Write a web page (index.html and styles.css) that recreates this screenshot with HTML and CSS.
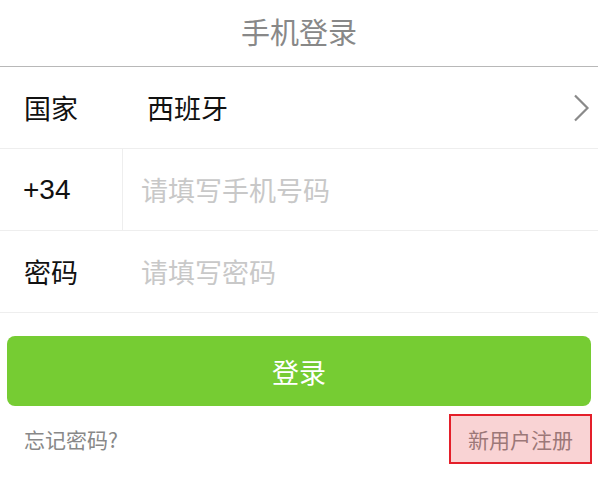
FILE: index.html
```html
<!DOCTYPE html>
<html lang="zh-CN">
<head>
    <meta charset="UTF-8">
    <meta name="viewport" content="width=device-width, initial-scale=1.0">
    <title>手机登录</title>
    <link rel="stylesheet" href="styles.css">
</head>
<body>
    <div class="header">手机登录</div>
    <div class="form">
        <div class="row">
            <div class="label">国家</div>
            <div class="value">西班牙</div>
            <svg class="arrow" width="18" height="28" viewBox="0 0 18 28">
                <path d="M3 1.5 L15.5 14 L3 26.5" fill="none" stroke="#8a8a8a" stroke-width="2.2"/>
            </svg>
        </div>
        <div class="row">
            <div class="label code">+34</div>
            <input class="field" type="tel" placeholder="请填写手机号码">
        </div>
        <div class="row">
            <div class="label">密码</div>
            <input class="field" type="password" placeholder="请填写密码">
        </div>
    </div>
    <button class="login-btn">登录</button>
    <div class="footer">
        <span class="forgot">忘记密码?</span>
        <span class="register">新用户注册</span>
    </div>
</body>
</html>
```

FILE: styles.css
```css
body {
    margin: 0;
    font-family: "Noto Sans CJK SC", "Noto Sans", sans-serif;
    background-color: #fff;
    color: #111;
}
.header {
    height: 66px;
    line-height: 62px;
    text-align: center;
    font-size: 29px;
    color: #888;
    border-bottom: 1px solid #b8b8b8;
}
.row {
    display: flex;
    align-items: center;
    height: 81px;
    border-bottom: 1px solid #eeeeee;
}
.label {
    width: 99px;
    padding-left: 24px;
    font-size: 27px;
    align-self: stretch;
    display: flex;
    align-items: center;
}
.label.code {
    border-right: 1px solid #eeeeee;
    width: 99px;
    padding-left: 23px;
    font-family: "Liberation Sans", Arial, sans-serif;
    font-size: 28px;
}
.value {
    flex: 1;
    padding-left: 24px;
    font-size: 27px;
}
.arrow {
    margin-right: 8px;
}
.field {
    flex: 1;
    border: none;
    outline: none;
    padding: 0 0 0 18px;
    font-family: "Noto Sans CJK SC", sans-serif;
    font-size: 27px;
    background: transparent;
}
.field::placeholder {
    color: #c8c8c8;
}
.login-btn {
    display: block;
    width: 584px;
    height: 70px;
    margin: 23px auto 0;
    border: none;
    border-radius: 8px;
    background-color: #76cc33;
    color: #fff;
    font-family: "Noto Sans CJK SC", sans-serif;
    font-size: 27px;
}
.footer {
    display: flex;
    justify-content: space-between;
    align-items: center;
    margin-top: 8px;
    padding: 0 6px 0 24px;
}
.forgot {
    font-size: 21px;
    color: #888;
}
.register {
    font-size: 21px;
    line-height: 30px;
    padding: 8px 17px;
    color: #9c7878;
    background-color: #f9d3d4;
    border: 2px solid #e41f2a;
}
```
